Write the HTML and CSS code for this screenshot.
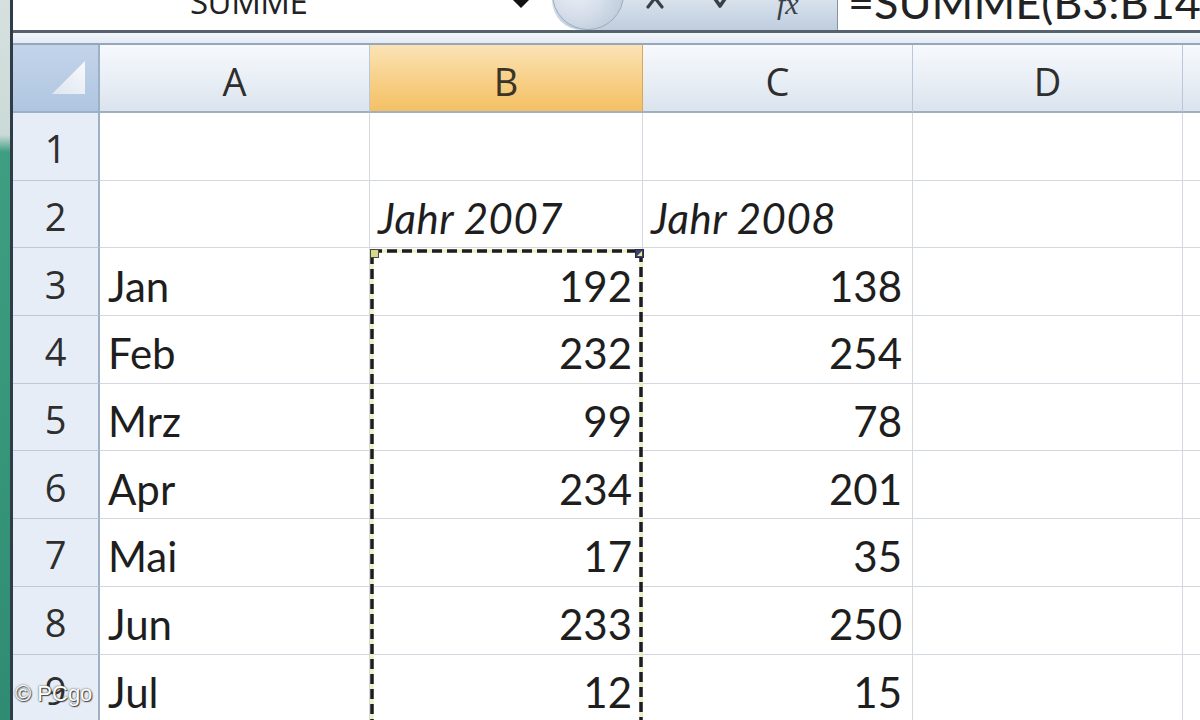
FILE: index.html
```html
<!DOCTYPE html>
<html lang="de">
<head>
<meta charset="utf-8">
<title>Excel – SUMME</title>
<link rel="stylesheet" href="styles.css">
</head>
<body>
<div class="window">
  <div class="edge"></div>
  <div class="edge-line"></div>
  <div class="app">
    <div class="formula-bar">
      <div class="name-box"><span class="name-text">SUMME</span><span class="dd"></span></div>
      <div class="fx-buttons">
        <span class="round-btn"></span>
        <svg class="ico ico-x" viewBox="0 0 24 24"><path d="M5 3 L19 21 M19 3 L5 21" stroke="#3a3f48" stroke-width="3.2" stroke-linecap="round" fill="none"/></svg>
        <svg class="ico ico-check" viewBox="0 0 24 24"><path d="M3 10 L10 20 L21 4" stroke="#3a3f48" stroke-width="3.6" stroke-linecap="round" stroke-linejoin="round" fill="none"/></svg>
        <span class="fx">fx</span>
      </div>
      <div class="formula-input"><span class="formula-text">=SUMME(B3:B14)</span></div>
    </div>
    <div class="band"></div>
    <div class="sheet">
      <div class="corner"><svg class="corner-tri" viewBox="0 0 32 32"><defs><linearGradient id="tg" x1="0" y1="1" x2="1" y2="0"><stop offset="0" stop-color="#dfe6ef"/><stop offset="1" stop-color="#f7f9fc"/></linearGradient></defs><path d="M0 32 L32 32 L32 0 Z" fill="url(#tg)"/></svg></div>
      <div class="ch">A</div>
      <div class="ch sel">B</div>
      <div class="ch">C</div>
      <div class="ch">D</div>
      <div class="ch last"></div>

      <div class="rh">1</div><div class="c"></div><div class="c"></div><div class="c"></div><div class="c"></div><div class="c"></div>
      <div class="rh">2</div><div class="c"></div><div class="c it">Jahr 2007</div><div class="c it">Jahr 2008</div><div class="c"></div><div class="c"></div>
      <div class="rh">3</div><div class="c">Jan</div><div class="c num">192</div><div class="c num">138</div><div class="c"></div><div class="c"></div>
      <div class="rh">4</div><div class="c">Feb</div><div class="c num">232</div><div class="c num">254</div><div class="c"></div><div class="c"></div>
      <div class="rh">5</div><div class="c">Mrz</div><div class="c num">99</div><div class="c num">78</div><div class="c"></div><div class="c"></div>
      <div class="rh">6</div><div class="c">Apr</div><div class="c num">234</div><div class="c num">201</div><div class="c"></div><div class="c"></div>
      <div class="rh">7</div><div class="c">Mai</div><div class="c num">17</div><div class="c num">35</div><div class="c"></div><div class="c"></div>
      <div class="rh">8</div><div class="c">Jun</div><div class="c num">233</div><div class="c num">250</div><div class="c"></div><div class="c"></div>
      <div class="rh">9</div><div class="c">Jul</div><div class="c num">12</div><div class="c num">15</div><div class="c"></div><div class="c"></div>

      <svg class="marquee" viewBox="0 0 274 520">
        <rect x="2" y="2" width="269" height="600" fill="none" stroke="#eef0c0" stroke-width="3.5"/>
        <rect x="2" y="2" width="269" height="600" fill="none" stroke="#1c1c24" stroke-width="3.5" stroke-dasharray="10 5"/>
        <rect x="0.5" y="0.5" width="8" height="8" fill="#d6d88a" stroke="#4a4a40" stroke-width="1"/>
        <rect x="265.5" y="0.5" width="8" height="8" fill="#3d3f7a" stroke="#2a2a40" stroke-width="1"/>
        <path d="M267 7 L272 2 L272 7 Z" fill="#e4e690"/>
      </svg>
    </div>
  </div>
</div>
<div class="watermark">© PCgo</div>
</body>
</html>
```

FILE: styles.css
```css
* { box-sizing: border-box; }
html, body { margin: 0; padding: 0; }
body {
  width: 1200px;
  height: 720px;
  overflow: hidden;
  background: #ffffff;
  position: relative;
  font-family: "Open Sans", "Noto Sans", sans-serif;
}
.window { display: flex; height: 720px; }
.edge {
  width: 10px;
  flex: none;
  background: linear-gradient(to bottom, #d6e1df 0px, #cbd9d7 135px, #3f9e82 152px, #2f8c72 100%);
}
.edge-line { width: 3px; flex: none; background: #2f3c4a; }
.app { flex: 1; display: flex; flex-direction: column; min-width: 0; overflow: hidden; }

/* formula bar */
.formula-bar {
  height: 33px;
  flex: none;
  display: flex;
  border-bottom: 3px solid #56636f;
  background: #fff;
  overflow: hidden;
}
.name-box {
  width: 539px;
  flex: none;
  display: flex;
  align-items: flex-start;
  padding-left: 177px;
}
.name-text {
  font-size: 33px;
  line-height: 33px;
  margin-top: -15px;
  color: #222;
  letter-spacing: -0.5px;
}
.dd {
  margin-left: auto;
  margin-right: 23px;
  width: 0; height: 0;
  border-left: 8px solid transparent;
  border-right: 8px solid transparent;
  border-top: 8px solid #111;
}
.fx-buttons {
  width: 286px;
  flex: none;
  display: flex;
  align-items: flex-start;
  background: linear-gradient(to bottom, #d8e2ed, #bfcddd);
  border-bottom-left-radius: 36px;
  border-right: 1px solid #8193a8;
}
.round-btn {
  width: 72px;
  height: 72px;
  flex: none;
  border-radius: 50%;
  margin-top: -42px;
  background: radial-gradient(circle at 35% 40%, #eef2f8 0, #d6dfea 45%, #b4c3d6 100%);
  border: 1px solid #9aabbf;
}
.ico { width: 24px; height: 24px; flex: none; margin-top: -14px; }
.ico-x { margin-left: 19px; }
.ico-check { margin-left: 43px; }
.fx {
  margin-left: 43px;
  font-family: "Liberation Serif", serif;
  font-style: italic;
  font-size: 30px;
  line-height: 30px;
  margin-top: -11px;
  color: #3a3f48;
}
.formula-input { flex: 1; padding-left: 10px; display: flex; align-items: flex-start; min-width: 0; overflow: hidden; }
.formula-text {
  font-family: Lato, "Open Sans", sans-serif;
  font-size: 45px;
  line-height: 45px;
  margin-top: -20px;
  color: #222;
  white-space: nowrap;
}
.band {
  height: 12px;
  flex: none;
  background: linear-gradient(to bottom, #f3f7fb, #e2eaf4);
  border-bottom: 2px solid #97a7ba;
}

/* sheet */
.sheet {
  position: relative;
  flex: 1;
  display: grid;
  grid-template-columns: 87px 270px 273px 270px 270px 1fr;
  grid-template-rows: 68px repeat(9, 67.7px);
}
.corner {
  background: linear-gradient(to bottom, #c2d4ea, #b0c6e0);
  border-right: 2px solid #9eb0c6;
  border-bottom: 2px solid #9eb0c4;
  position: relative;
}
.corner-tri {
  position: absolute;
  left: 39px;
  top: 16px;
  width: 33px;
  height: 33px;
}
.ch {
  background: linear-gradient(to bottom, #f7f9fc 0%, #e8eef5 55%, #dbe3ed 100%);
  border-right: 1px solid #b9c7d8;
  border-bottom: 2px solid #9eb0c4;
  display: flex;
  align-items: center;
  justify-content: center;
  padding-top: 6px;
  font-size: 38px;
  color: #2e2e2e;
}
.ch.sel {
  background: linear-gradient(to bottom, #fbe3b6 0%, #f7cf86 55%, #f4c064 100%);
  border-right-color: #dba552;
  color: #3a3526;
}
.rh {
  background: #e6edf7;
  border-right: 2px solid #9eb0c6;
  border-bottom: 1px solid #bdc9d8;
  display: flex;
  align-items: center;
  justify-content: center;
  padding-top: 4px;
  font-size: 38px;
  color: #2e2e2e;
}
.c {
  border-right: 1px solid #d3d8e0;
  border-bottom: 1px solid #d3d8e0;
  display: flex;
  align-items: center;
  padding: 8px 10px 0 8px;
  font-family: Lato, "Open Sans", sans-serif;
  font-size: 42px;
  color: #1e1e1e;
  white-space: nowrap;
}
.c.num { justify-content: flex-end; }
.c.it { font-style: italic; letter-spacing: 0.5px; }

.marquee {
  position: absolute;
  left: 357px;
  top: 204px;
  width: 274px;
  height: 520px;
}

.watermark {
  position: absolute;
  left: 15px;
  top: 681px;
  font-family: "Liberation Sans", Arial, sans-serif;
  font-size: 22px;
  color: #ffffff;
  text-shadow: 0 0 2px #3a3a3a, 1px 1px 1px #444;
}
```
